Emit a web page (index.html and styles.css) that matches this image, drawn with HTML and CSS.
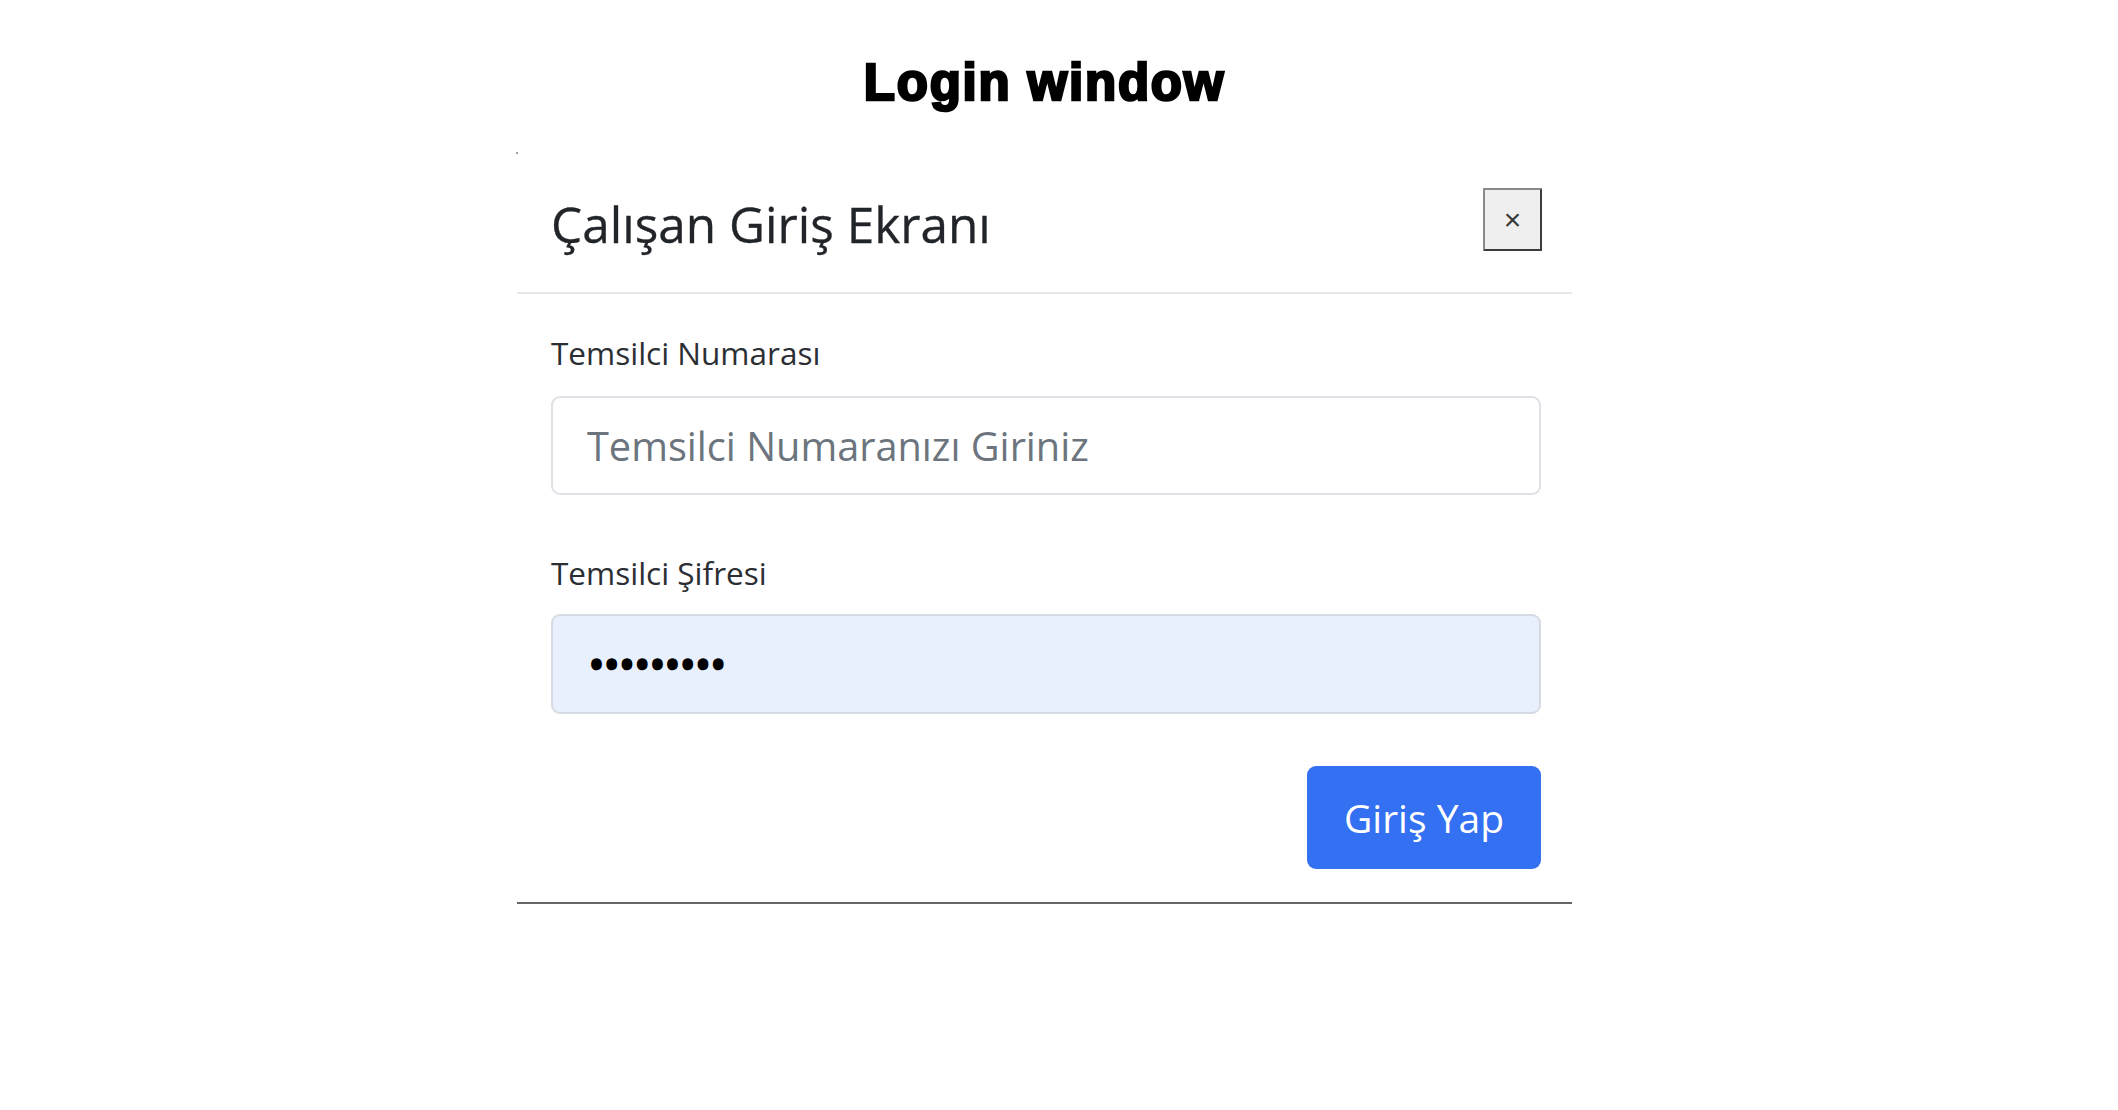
FILE: index.html
```html
<!DOCTYPE html>
<html lang="tr">
<head>
<meta charset="utf-8">
<title>Login window</title>
<link rel="stylesheet" href="styles.css">
</head>
<body>
<div class="page">
  <h1 class="page-title">Login window</h1>
  <div class="modal">
    <div class="modal-header">
      <h2 class="modal-title">Çalışan Giriş Ekranı</h2>
      <button class="close-btn" type="button">×</button>
    </div>
    <div class="modal-body">
      <div class="form-group">
        <label class="form-label" for="num">Temsilci Numarası</label>
        <input class="form-control" id="num" type="text" placeholder="Temsilci Numaranızı Giriniz">
      </div>
      <div class="form-group">
        <label class="form-label" for="pass">Temsilci Şifresi</label>
        <input class="form-control autofill" id="pass" type="password" value="123456789">
      </div>
      <div class="modal-footer">
        <button class="btn-primary" type="button">Giriş Yap</button>
      </div>
    </div>
  </div>
</div>
</body>
</html>
```

FILE: styles.css
```css
html, body {
  margin: 0;
  padding: 0;
  background: #ffffff;
}

.page {
  width: 1055px;
  margin-left: 517px;
  padding-top: 57px;
}

.page-title {
  margin: 0;
  font-family: "Liberation Sans", Arial, sans-serif;
  font-weight: 700;
  font-size: 51px;
  line-height: 1;
  letter-spacing: 1.8px;
  color: #000;
  -webkit-text-stroke: 2.6px #000;
  text-align: center;
}

.modal {
  position: relative;
  margin-top: 44px;
  background: #fff;
  border-bottom: 2px solid #666666;
  font-family: "Open Sans", "Noto Sans", sans-serif;
  color: #212529;
}

.modal::before {
  content: "";
  position: absolute;
  left: -1px;
  top: 0;
  width: 2px;
  height: 2px;
  background: #a0a0a0;
}

.modal-header {
  display: flex;
  align-items: center;
  justify-content: space-between;
  padding: 36px 30px 41px 34px;
  border-bottom: 2px solid #e6e8eb;
}

.modal-title {
  margin: 5px 0 -5px 0;
  font-size: 49.5px;
  font-weight: 500;
  line-height: 1.2;
  color: #212529;
  -webkit-text-stroke: 0.3px #212529;
}

.close-btn {
  width: 59px;
  height: 63px;
  padding: 0;
  background: #efefef;
  border-style: solid;
  border-width: 2px;
  border-color: #8a8a8a #3c3c3c #3c3c3c #8a8a8a;
  border-radius: 1px;
  font-family: "Liberation Sans", Arial, sans-serif;
  font-size: 30px;
  line-height: 1;
  color: #3a3a3a;
}

.modal-body {
  padding: 35px 31px 33px 34px;
}

.form-group {
  margin-bottom: 54px;
}

.form-label {
  display: block;
  margin-bottom: 19px;
  font-size: 31.5px;
  line-height: 48px;
  color: #2b2f33;
}

.form-group + .form-group .form-label {
  margin-bottom: 17px;
}

.form-control {
  display: block;
  box-sizing: border-box;
  width: 100%;
  height: 99px;
  padding: 0 34px;
  border: 2px solid #dee2e6;
  border-radius: 9px;
  background: #fff;
  font-family: "Open Sans", "Noto Sans", sans-serif;
  font-size: 39.7px;
  color: #000;
  outline: none;
}

.form-control::placeholder {
  color: #6c757d;
}

.form-control.autofill {
  height: 100px;
  background: #e8f0fe;
  border-color: #d6dbe3;
  letter-spacing: 0.3px;
  padding-left: 36px;
  -webkit-text-stroke: 2.5px #000;
}

.modal-footer {
  display: flex;
  justify-content: flex-end;
  margin-top: -2px;
}

.btn-primary {
  width: 234px;
  height: 103px;
  padding: 0;
  border: none;
  border-radius: 9px;
  background: #3370f2;
  color: #fff;
  font-family: "Open Sans", "Noto Sans", sans-serif;
  font-size: 39px;
  line-height: 1;
}
```
